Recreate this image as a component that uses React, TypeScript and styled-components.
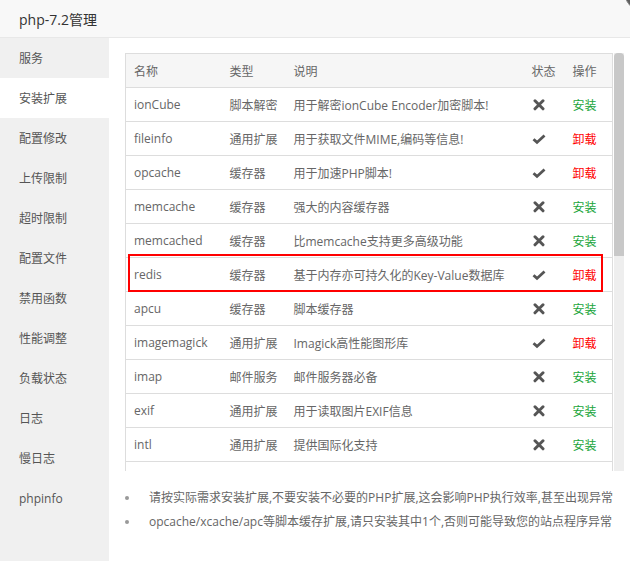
import React from "react";
import styled, { createGlobalStyle } from "styled-components";

const Global = createGlobalStyle`
  html, body { margin: 0; padding: 0; background: #fff; }
  body { font-family: "Open Sans", "Noto Sans CJK SC", sans-serif; font-size: 12px; color: #555; }
  * { box-sizing: border-box; }
`;

const Page = styled.div`
  width: 630px;
  height: 561px;
  display: flex;
  flex-direction: column;
  overflow: hidden;
  position: relative;
`;

const TitleBar = styled.div`
  height: 38px;
  flex: none;
  background: #f8f8f8;
  border-bottom: 1px solid #e8e8e8;
  display: flex;
  align-items: center;
  padding-left: 19px;
  font-size: 14px;
  color: #333;
`;

const CloseKnob = styled.span`
  position: fixed;
  left: 625px;
  top: -20px;
  width: 30px;
  height: 30px;
  border-radius: 50%;
  background: #5f5f5f;
  border: 1px solid #8a8a8a;
`;

const Body = styled.div`
  flex: 1;
  display: flex;
  min-height: 0;
`;

const Sidebar = styled.nav`
  width: 109px;
  flex: none;
  background: #f0f0f0;
  display: flex;
  flex-direction: column;
`;

const NavItem = styled.div<{ $active?: boolean }>`
  height: 40px;
  display: flex;
  align-items: center;
  padding-left: 19px;
  font-size: 12px;
  color: #555;
  background: ${(p) => (p.$active ? "#fff" : "transparent")};
`;

const Content = styled.main`
  flex: 1;
  padding: 15px 6px 0 16px;
  display: flex;
  flex-direction: column;
`;

const Frame = styled.div`
  position: relative;
  height: 418px;
  flex: none;
`;

const ScrollBox = styled.div`
  position: relative;
  height: 100%;
  overflow-y: auto;
  scrollbar-width: none;
  &::-webkit-scrollbar { display: none; }
`;

const ScrollTrack = styled.div`
  position: absolute;
  top: 0;
  right: 0;
  bottom: 0;
  width: 10px;
  background: #eeeeee;
`;

const ScrollThumb = styled.div`
  height: 203px;
  background: #c8c8c8;
  border-radius: 4px 4px 0 0;
`;

const Table = styled.table`
  width: 488px;
  border-collapse: collapse;
  table-layout: fixed;
  border: 1px solid #ddd;
`;

const HeadCell = styled.th`
  height: 34px;
  padding: 0 0 0 8px;
  text-align: left;
  font-weight: normal;
  color: #666;
  background: #f6f6f6;
  border-bottom: 1px solid #ddd;
  white-space: nowrap;
`;

const Cell = styled.td`
  height: 34px;
  padding: 0 0 0 8px;
  color: #666;
  border-bottom: 1px solid #ddd;
  white-space: nowrap;
  overflow: hidden;
  vertical-align: middle;
`;

const Action = styled.a<{ $remove?: boolean }>`
  color: ${(p) => (p.$remove ? "#ff0000" : "#20a53a")};
  text-decoration: none;
  cursor: pointer;
`;

const StatusIcon = styled.svg`
  display: block;
  width: 14px;
  height: 12px;
`;

const Highlight = styled.span`
  position: absolute;
  left: 3px;
  top: 201px;
  width: 475px;
  height: 38px;
  border: 2px solid #f00;
  pointer-events: none;
`;

const Notes = styled.ul`
  list-style: none;
  margin: 15px 0 0 0;
  padding: 0;
`;

const Note = styled.li`
  position: relative;
  height: 24px;
  line-height: 24px;
  padding-left: 24px;
  color: #666;
  white-space: nowrap;
  &::before {
    content: "";
    position: absolute;
    left: 0;
    top: 10px;
    width: 4px;
    height: 4px;
    border-radius: 50%;
    background: #999;
  }
`;

type Ext = { name: string; type: string; desc: string; on: boolean };

const exts: Ext[] = [
  { name: "ionCube", type: "脚本解密", desc: "用于解密ionCube Encoder加密脚本!", on: false },
  { name: "fileinfo", type: "通用扩展", desc: "用于获取文件MIME,编码等信息!", on: true },
  { name: "opcache", type: "缓存器", desc: "用于加速PHP脚本!", on: true },
  { name: "memcache", type: "缓存器", desc: "强大的内容缓存器", on: false },
  { name: "memcached", type: "缓存器", desc: "比memcache支持更多高级功能", on: false },
  { name: "redis", type: "缓存器", desc: "基于内存亦可持久化的Key-Value数据库", on: true },
  { name: "apcu", type: "缓存器", desc: "脚本缓存器", on: false },
  { name: "imagemagick", type: "通用扩展", desc: "Imagick高性能图形库", on: true },
  { name: "imap", type: "邮件服务", desc: "邮件服务器必备", on: false },
  { name: "exif", type: "通用扩展", desc: "用于读取图片EXIF信息", on: false },
  { name: "intl", type: "通用扩展", desc: "提供国际化支持", on: false },
  { name: "xsl", type: "通用扩展", desc: "xsl解析扩展", on: false },
  { name: "swoole", type: "通用扩展", desc: "异步、并行、高性能网络通信引擎", on: false },
  { name: "Swoole4", type: "通用扩展", desc: "异步、并行、高性能网络通信引擎", on: false },
  { name: "mongodb", type: "通用扩展", desc: "MongoDB驱动", on: false },
  { name: "yaf", type: "通用扩展", desc: "Yaf高性能PHP框架", on: false },
  { name: "phalcon3", type: "通用扩展", desc: "phalcon3.4.5框架", on: false },
  { name: "sg11", type: "脚本解密", desc: "SG11解密扩展", on: false },
  { name: "xdebug", type: "调试器", desc: "不多说,不了解的不要安装", on: false },
  { name: "sqlsrv", type: "通用扩展", desc: "SQL Server驱动", on: false },
  { name: "pdo_sqlsrv", type: "通用扩展", desc: "SQL Server的PDO驱动", on: false },
  { name: "yac", type: "缓存器", desc: "共享内存缓存扩展", on: false },
  { name: "zstd", type: "通用扩展", desc: "Zstandard压缩扩展", on: false },
  { name: "ldap", type: "通用扩展", desc: "LDAP目录访问", on: false },
];

const navItems = [
  "服务", "安装扩展", "配置修改", "上传限制", "超时限制", "配置文件",
  "禁用函数", "性能调整", "负载状态", "日志", "慢日志", "phpinfo",
];

function Status({ on }: { on: boolean }) {
  return on ? (
    <StatusIcon viewBox="0 0 14 12">
      <polyline points="1.5,6.2 5,9.4 12.5,2.4" fill="none" stroke="#555" strokeWidth="2.8" strokeLinejoin="miter" />
    </StatusIcon>
  ) : (
    <StatusIcon viewBox="0 0 14 12">
      <path d="M3 1.8 L11 9.8 M11 1.8 L3 9.8" fill="none" stroke="#555" strokeWidth="3" strokeLinecap="round" />
    </StatusIcon>
  );
}

export default function App() {
  return (
    <Page>
      <Global />
      <TitleBar>php-7.2管理</TitleBar>
      <CloseKnob />
      <Body>
        <Sidebar>
          {navItems.map((n) => (
            <NavItem key={n} $active={n === "安装扩展"}>{n}</NavItem>
          ))}
        </Sidebar>
        <Content>
          <Frame>
            <ScrollBox>
              <Table>
                <colgroup>
                  <col style={{ width: 96 }} />
                  <col style={{ width: 64 }} />
                  <col style={{ width: 238 }} />
                  <col style={{ width: 41 }} />
                  <col />
                </colgroup>
                <thead>
                  <tr>
                    <HeadCell>名称</HeadCell>
                    <HeadCell>类型</HeadCell>
                    <HeadCell>说明</HeadCell>
                    <HeadCell>状态</HeadCell>
                    <HeadCell>操作</HeadCell>
                  </tr>
                </thead>
                <tbody>
                  {exts.map((e) => (
                    <tr key={e.name}>
                      <Cell>{e.name}</Cell>
                      <Cell>{e.type}</Cell>
                      <Cell>{e.desc}</Cell>
                      <Cell><Status on={e.on} /></Cell>
                      <Cell><Action $remove={e.on}>{e.on ? "卸载" : "安装"}</Action></Cell>
                    </tr>
                  ))}
                </tbody>
              </Table>
              <Highlight />
            </ScrollBox>
            <ScrollTrack>
              <ScrollThumb />
            </ScrollTrack>
          </Frame>
          <Notes>
            <Note>请按实际需求安装扩展,不要安装不必要的PHP扩展,这会影响PHP执行效率,甚至出现异常</Note>
            <Note>opcache/xcache/apc等脚本缓存扩展,请只安装其中1个,否则可能导致您的站点程序异常</Note>
          </Notes>
        </Content>
      </Body>
    </Page>
  );
}
